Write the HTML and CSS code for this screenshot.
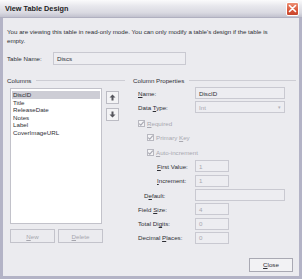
FILE: index.html
```html
<!DOCTYPE html>
<html lang="en">
<head>
    <meta charset="UTF-8">
    <title>View Table Design</title>
    <link rel="stylesheet" href="styles.css">
</head>
<body>

<div class="window">
    <div class="titlebar">
        <span class="title">View Table Design</span>
        <span class="close-x">
            <svg width="9" height="9" viewBox="0 0 9 9"><path d="M1.5 1.5 L7.5 7.5 M7.5 1.5 L1.5 7.5" stroke="#fff" stroke-width="1.6" stroke-linecap="round"/></svg>
        </span>
    </div>

    <div class="dialog">
        <p class="message">You are viewing this table in read-only mode. You can only modify a table's design if the table is<br>empty.</p>

        <div class="name-row">
            <span class="label">Table Name:</span>
            <span class="field table-name">Discs</span>
        </div>

        <div class="panels">
            <!-- Columns -->
            <div class="group group-columns">
                <div class="group-head"><span>Columns</span></div>
                <div class="list-area">
                    <ul class="column-list">
                        <li class="selected">DiscID</li>
                        <li>Title</li>
                        <li>ReleaseDate</li>
                        <li>Notes</li>
                        <li>Label</li>
                        <li>CoverImageURL</li>
                    </ul>
                    <div class="arrows">
                        <span class="arrow-btn">
                            <svg width="7" height="7" viewBox="0 0 7 7"><path d="M3.5 0.5 L6.5 3.5 H4.5 V6.5 H2.5 V3.5 H0.5 Z" fill="#55555c"/></svg>
                        </span>
                        <span class="arrow-btn">
                            <svg width="7" height="7" viewBox="0 0 7 7"><path d="M3.5 6.5 L6.5 3.5 H4.5 V0.5 H2.5 V3.5 H0.5 Z" fill="#55555c"/></svg>
                        </span>
                    </div>
                </div>
                <div class="list-buttons">
                    <span class="btn disabled"><u>N</u>ew</span>
                    <span class="btn disabled"><u>D</u>elete</span>
                </div>
            </div>

            <!-- Column Properties -->
            <div class="group group-props">
                <div class="group-head"><span>Column Properties</span></div>
                <div class="props">
                    <div class="prop-row">
                        <span class="label"><u>N</u>ame:</span>
                        <span class="field wide">DiscID</span>
                    </div>
                    <div class="prop-row">
                        <span class="label">Data <u>T</u>ype:</span>
                        <span class="field wide select dim">Int<span class="caret">&#9662;</span></span>
                    </div>
                    <div class="prop-row check-row">
                        <span class="check"><svg width="7" height="7" viewBox="0 0 7 7"><path d="M1.2 3.6 L2.8 5.2 L5.8 1.6" fill="none" stroke="#a8a8b2" stroke-width="1.1"/></svg></span>
                        <span class="dim"><u>R</u>equired</span>
                    </div>
                    <div class="prop-row check-row indent">
                        <span class="check"><svg width="7" height="7" viewBox="0 0 7 7"><path d="M1.2 3.6 L2.8 5.2 L5.8 1.6" fill="none" stroke="#a8a8b2" stroke-width="1.1"/></svg></span>
                        <span class="dim">Primary <u>K</u>ey</span>
                    </div>
                    <div class="prop-row check-row indent">
                        <span class="check"><svg width="7" height="7" viewBox="0 0 7 7"><path d="M1.2 3.6 L2.8 5.2 L5.8 1.6" fill="none" stroke="#a8a8b2" stroke-width="1.1"/></svg></span>
                        <span class="dim"><u>A</u>uto-increment</span>
                    </div>
                    <div class="prop-row">
                        <span class="label indent-2"><u>F</u>irst Value:</span>
                        <span class="field short dim">1</span>
                    </div>
                    <div class="prop-row">
                        <span class="label indent-2"><u>I</u>ncrement:</span>
                        <span class="field short dim">1</span>
                    </div>
                    <div class="prop-row">
                        <span class="label indent-1">D<u>e</u>fault:</span>
                        <span class="field wide"></span>
                    </div>
                    <div class="prop-row">
                        <span class="label">Field <u>S</u>ize:</span>
                        <span class="field short dim">4</span>
                    </div>
                    <div class="prop-row">
                        <span class="label">Total Di<u>g</u>its:</span>
                        <span class="field short dim">0</span>
                    </div>
                    <div class="prop-row">
                        <span class="label">Decimal <u>P</u>laces:</span>
                        <span class="field short dim">0</span>
                    </div>
                </div>
            </div>
        </div>

        <div class="footer">
            <span class="btn close-btn"><u>C</u>lose</span>
        </div>
    </div>
</div>

</body>
</html>
```

FILE: styles.css
```css
body {
    margin: 0;
    font-family: 'Liberation Sans', Arial, sans-serif;
    font-size: 6.2px;
    color: #2e2e34;
    background-color: #ebebef;
}
.window {
    width: 302px;
    height: 279px;
    box-sizing: border-box;
    display: flex;
    flex-direction: column;
    border-left: 3px solid #b3b3c6;
    border-right: 3px solid #b3b3c6;
    border-bottom: 3px solid #b3b3c6;
    background-color: #ebebef;
}
.titlebar {
    height: 18px;
    margin: 0 -3px;
    padding: 0 3px 0 5px;
    display: flex;
    align-items: center;
    justify-content: space-between;
    background: linear-gradient(#fbfbfc 0%, #e8e8ed 35%, #d9d9e1 75%, #c2c2ce 100%);
    border-bottom: 1px solid #b0b0c0;
    box-sizing: border-box;
}
.title {
    font-weight: bold;
    font-size: 7.3px;
    color: #1e1e24;
}
.close-x {
    width: 13px;
    height: 14px;
    box-sizing: border-box;
    border: 1px solid #fff;
    border-radius: 2px;
    background: linear-gradient(#ec8f74, #d9573a 60%, #c8452c);
    display: flex;
    align-items: center;
    justify-content: center;
}
.dialog {
    flex: 1;
    display: flex;
    flex-direction: column;
    padding: 9px 3px 0 4px;
}
.message {
    margin: 0;
    line-height: 9px;
    white-space: nowrap;
}
.name-row {
    display: flex;
    align-items: center;
    margin-top: 7px;
    height: 13px;
}
.name-row .label {
    width: 46px;
}
.field {
    height: 12px;
    box-sizing: border-box;
    border: 1px solid #c9c9d1;
    background-color: #ededf1;
    padding: 0 3px;
    display: flex;
    align-items: center;
    position: relative;
}
.table-name {
    width: 133px;
    height: 13px;
}
.panels {
    display: flex;
    margin-top: 11px;
}
.group-head {
    display: flex;
    align-items: center;
    height: 8px;
}
.group-head::after {
    content: "";
    flex: 1;
    border-top: 1px solid #cdcdd4;
    margin-left: 5px;
}
.group-columns {
    width: 118px;
}
.group-props {
    margin-left: 8px;
    flex: 1;
}
.list-area {
    display: flex;
    margin-top: 4px;
    padding-left: 3px;
}
.column-list {
    list-style: none;
    margin: 0;
    padding: 2px 1px;
    width: 92px;
    height: 136px;
    box-sizing: border-box;
    border: 1px solid #c2c2ca;
    background-color: #fff;
}
.column-list li {
    height: 7.6px;
    line-height: 7.6px;
    padding-left: 1px;
}
.column-list li.selected {
    background-color: #cdcdd5;
}
.arrows {
    display: flex;
    flex-direction: column;
    gap: 4px;
    margin: 3px 0 0 4px;
}
.arrow-btn {
    width: 13px;
    height: 13px;
    box-sizing: border-box;
    border: 1px solid #bcbcc4;
    background-color: #f3f3f5;
    display: flex;
    align-items: center;
    justify-content: center;
}
.list-buttons {
    display: flex;
    gap: 3px;
    margin-top: 5px;
    padding-left: 3px;
}
.btn {
    width: 45px;
    height: 14px;
    box-sizing: border-box;
    border: 1px solid #b9b9c2;
    display: flex;
    align-items: center;
    justify-content: center;
}
.btn.disabled {
    color: #a6a6ae;
    border-color: #c3c3cb;
}
.props {
    display: flex;
    flex-direction: column;
    gap: 2.3px;
    margin-top: 3px;
    padding-left: 5px;
}
.prop-row {
    display: flex;
    align-items: center;
    height: 12px;
}
.prop-row .label {
    width: 57px;
    flex: none;
    box-sizing: border-box;
}
.indent-1 {
    padding-left: 6px;
}
.indent-2 {
    padding-left: 19px;
}
.wide {
    width: 90px;
}
.short {
    width: 34px;
}
.dim {
    color: #a8a8b0;
}
.select .caret {
    position: absolute;
    right: 3px;
    font-size: 5px;
    color: #b0b0b8;
}
.check-row {
    margin-top: 2px;
}
.check-row + .check-row {
    margin-top: 0;
}
.check-row.indent {
    padding-left: 9px;
}
.check {
    width: 7px;
    height: 7px;
    box-sizing: border-box;
    border: 1px solid #b8b8c0;
    background-color: #f4f4f6;
    margin-right: 2px;
    display: flex;
    align-items: center;
    justify-content: center;
}
.check svg {
    flex: none;
}
.footer {
    display: flex;
    justify-content: flex-end;
    margin-top: 14px;
    padding-right: 3px;
}
.close-btn {
    width: 44px;
    border-color: #a9a9b3;
    background-color: #f2f2f4;
    color: #2e2e34;
}
u {
    text-decoration-thickness: 0.6px;
    text-underline-offset: 1px;
}
```
